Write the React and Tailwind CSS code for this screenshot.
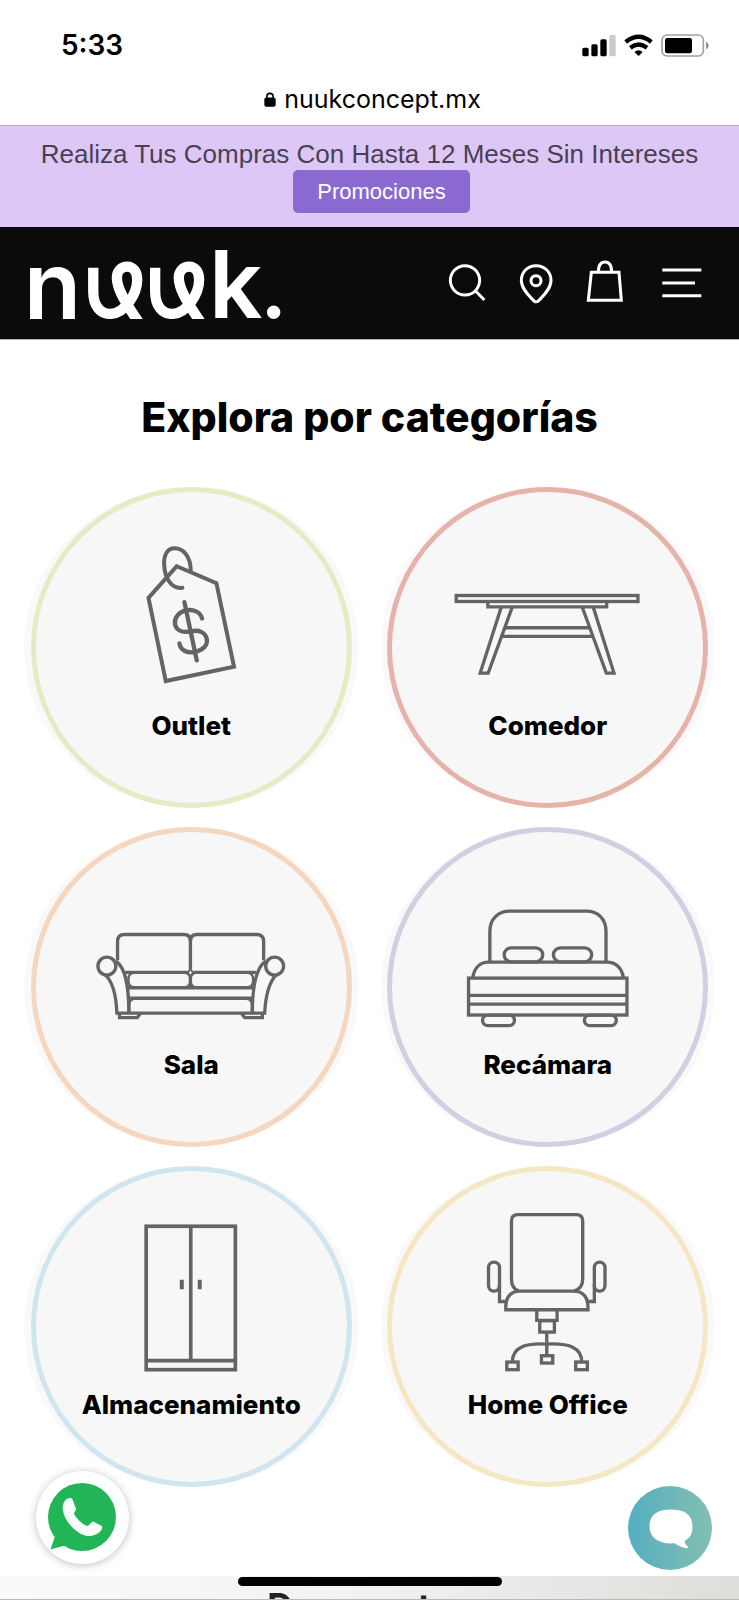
import React from "react";

const stroke = {
  fill: "none",
  stroke: "#646464",
  strokeWidth: 11,
};

function OutletIcon() {
  return (
    <svg viewBox="48 36 933 630" className="w-full" aria-hidden="true" {...stroke} strokeLinecap="round">
      <path d="M471 259 L590 310 L643 561 L438 604 L386 354 Z" strokeWidth="12" />
      <path d="M513 270 C512 232 493 205 464 205 C441 205 432 228 433 254 C435 292 452 328 488 324" strokeWidth="12" />
      <path d="M494 367 L531 542" strokeWidth="13" />
      <path d="M547 416 C542 396 520 387 498 392 C476 397 462 415 466 434 C471 455 492 459 513 455 C538 449 556 457 561 477 C565 497 549 512 525 517 C501 521 482 511 479 491" strokeWidth="13" />
    </svg>
  );
}

function TableIcon() {
  return (
    <svg viewBox="66 36 933 630" className="w-full" aria-hidden="true" {...stroke} strokeWidth="10">
      <rect x="259" y="347" width="546" height="18" />
      <path d="M354 365 V381 H711 V365" />
      <path d="M394 383 L331 580 H355 L427 383" />
      <path d="M638 383 L710 580 H733 L671 383" />
      <path d="M405 444 H661 M395 470 H670" />
    </svg>
  );
}

function SofaIcon() {
  return (
    <svg viewBox="48 33 933 630" className="w-full" aria-hidden="true" {...stroke} strokeWidth="10">
      <path d="M293 418 V362 Q293 341 314 341 H492 Q512 341 512 361 Q512 341 532 341 H711 Q732 341 732 362 V418" />
      <path d="M512 355 V445 M512 466 V500" />
      <circle cx="261" cy="436" r="27" />
      <circle cx="765" cy="436" r="27" />
      <path d="M288 421 C316 440 327 490 327 577 M738 421 C710 440 698 490 698 577" />
      <path d="M257 463 C280 485 289 525 291 577 H735 C738 525 748 485 769 463" />
      <path d="M316 455 H503 M521 455 H709" />
      <rect x="326" y="456" width="185" height="43" rx="16" strokeWidth="7" />
      <rect x="513" y="456" width="187" height="43" rx="16" strokeWidth="7" />
      <path d="M503 456 L512 446 L521 456 L512 466 Z" strokeWidth="6" />
      <path d="M325 501 H700 M327 532 H698" />
      <path d="M328 577 V552 Q328 534 346 534 H679 Q697 534 697 552 V577" strokeWidth="8" />
      <path d="M299 579 V591 H352 L361 579 M728 579 V591 H675 L666 579" />
    </svg>
  );
}

function BedIcon() {
  return (
    <svg viewBox="66 33 933 630" className="w-full" aria-hidden="true" {...stroke} strokeWidth="10">
      <path d="M360 423 V332 C360 294 385 271 420 271 H650 C685 271 709 294 709 332 V423" />
      <rect x="403" y="381" width="116" height="42" rx="21" />
      <rect x="551" y="381" width="115" height="42" rx="21" />
      <path d="M309 470 C313 441 331 424 357 424 H712 C738 424 757 441 761 470" />
      <rect x="296" y="472" width="476" height="111" />
      <path d="M296 524 H772 M296 550 H772" />
      <rect x="338" y="583" width="96" height="32" rx="16" />
      <rect x="644" y="583" width="96" height="32" rx="16" />
    </svg>
  );
}

function WardrobeIcon() {
  return (
    <svg viewBox="48 30 933 630" className="w-full" aria-hidden="true" {...stroke}>
      <rect x="379" y="196" width="268" height="431" />
      <path d="M513 196 V600 M379 600 H647" />
      <path d="M486 357 V385 M540 357 V385" strokeWidth="12" />
    </svg>
  );
}

function ChairIcon() {
  return (
    <svg viewBox="66 30 933 630" className="w-full" aria-hidden="true" {...stroke} strokeWidth="10">
      <path d="M447 391 Q425 382 425 355 V180 Q425 161 444 161 H620 Q639 161 639 180 V355 Q639 382 613 391" />
      <path d="M408 447 C406 412 420 391 451 391 H612 C643 391 656 412 655 447 Z" />
      <rect x="356" y="304" width="33" height="87" rx="16" />
      <rect x="674" y="304" width="32" height="87" rx="16" />
      <path d="M389 372 V422 H413 M674 372 V422 H650" />
      <path d="M501 447 V479 H562 V447" />
      <rect x="510" y="480" width="44" height="34" />
      <path d="M531 514 V583 M428 603 C428 562 460 547 531 550 C602 547 636 562 636 603" />
      <rect x="411" y="604" width="34" height="23" />
      <rect x="515" y="585" width="34" height="22" />
      <rect x="618" y="604" width="35" height="23" />
    </svg>
  );
}

const categories = [
  { name: "Outlet", ring: "border-[#e7ebc5]", Icon: OutletIcon },
  { name: "Comedor", ring: "border-[#e6b3aa]", Icon: TableIcon },
  { name: "Sala", ring: "border-[#f5d6bf]", Icon: SofaIcon },
  { name: "Recámara", ring: "border-[#d2cfe3]", Icon: BedIcon },
  { name: "Almacenamiento", ring: "border-[#cfe5f0]", Icon: WardrobeIcon },
  { name: "Home Office", ring: "border-[#f6e7c3]", Icon: ChairIcon },
];

function StatusBar() {
  return (
    <div className="shrink-0 border-b border-[#b7a6c9] bg-white pt-[21px] pb-2 font-['Inter',sans-serif] text-black">
      <div className="flex h-12 items-center justify-between pr-[30px] pl-[61px]">
        <span className="text-[28px] leading-8 font-semibold">5:33</span>
        <div className="flex items-center gap-2">
          <svg viewBox="640 98 102 69" className="h-[23px] w-[34px]" aria-hidden="true">
            <rect x="641" y="139" width="19" height="26" rx="5" />
            <rect x="668" y="129" width="19" height="36" rx="5" />
            <rect x="695" y="114" width="19" height="51" rx="5" />
            <rect x="722" y="101" width="19" height="64" rx="5" fill="#cbcbcb" />
          </svg>
          <svg viewBox="765 98 87 69" className="h-[23px] w-[29px]" aria-hidden="true" fill="none" stroke="#000" strokeWidth="13">
            <path d="M770 122 Q809 91 847 122" />
            <path d="M784 139 Q809 120 834 139" />
            <path d="M796 152 Q809 142 821 152 L809 164 Z" fill="#000" stroke="none" />
          </svg>
          <svg viewBox="876 98 144 69" className="h-[23px] w-[48px]" aria-hidden="true">
            <rect x="879" y="101" width="124" height="63" rx="15" fill="none" stroke="#a3a3a3" strokeWidth="5" />
            <rect x="888" y="110" width="81" height="46" rx="7" />
            <path d="M1011 121 Q1019 125 1019 132 Q1019 140 1011 144 Z" fill="#8f8f8f" />
          </svg>
        </div>
      </div>
      <div className="mt-3 flex items-center justify-center gap-2 pl-1.5">
        <svg viewBox="790 274 37 46" className="h-[15px] w-3" aria-hidden="true">
          <rect x="791" y="291" width="35" height="28" rx="6" />
          <path d="M799 294 V287 Q799 278 808 278 Q818 278 818 287 V294" fill="none" stroke="#000" strokeWidth="5" />
        </svg>
        <span className="text-[25px] leading-9">nuukconcept.mx</span>
      </div>
    </div>
  );
}

function Logo() {
  return (
    <svg viewBox="84 375 766 228" className="w-[255px] overflow-visible" role="img" aria-label="nuuk." fill="#fff">
      <defs>
        <clipPath id="baseline">
          <rect x="84" y="375" width="766" height="222" />
        </clipPath>
      </defs>
      <text x="71" y="596" fontFamily="Inter, sans-serif" fontSize="282" fontWeight="600">n</text>
      <g clipPath="url(#baseline)" fill="none" stroke="#fff" strokeWidth="31">
        <path d="M280 443 V515 C280 560 302 582 330 582 C375 582 412 520 412 480 C412 455 400 440 382 440 C363 440 351 455 351 474 C351 502 370 540 416 606" />
        <path d="M466 443 V515 C466 560 488 582 516 582 C561 582 598 520 598 480 C598 455 586 440 568 440 C549 440 537 455 537 474 C537 502 556 540 602 606" />
      </g>
      <text x="628" y="595" fontFamily="Inter, sans-serif" fontSize="282" fontWeight="600">k</text>
      <circle cx="822" cy="577" r="20" />
    </svg>
  );
}

function Header() {
  const icon = { fill: "none", stroke: "#fff", strokeWidth: 9, "aria-hidden": true };
  return (
    <header className="flex h-[113px] shrink-0 items-center justify-between border-b border-[#b5b5b5] bg-[#0b0b0b] pr-[37px] pl-7">
      <a href="#inicio">
        <Logo />
      </a>
      <nav className="flex items-center gap-[29px]">
        <button type="button" aria-label="Buscar">
          <svg viewBox="232 417 120 144" className="h-12 w-10" {...icon}>
            <circle cx="286" cy="481" r="44" />
            <path d="M317 512 L344 540" />
          </svg>
        </button>
        <a href="#tiendas" aria-label="Tiendas">
          <svg viewBox="439 417 120 144" className="h-12 w-10" {...icon}>
            <path d="M499 437 C473 437 455 457 455 481 C455 508 480 529 493 543 Q499 548 506 543 C519 529 544 508 544 481 C544 457 526 437 499 437 Z" />
            <circle cx="499" cy="482" r="15" />
          </svg>
        </a>
        <a href="#carrito" aria-label="Carrito">
          <svg viewBox="648 417 120 144" className="h-12 w-10" {...icon}>
            <path d="M667 457 H750 L757 541 H658 Z" />
            <path d="M688 457 C688 436 694 426 708 426 C722 426 728 436 728 457" />
          </svg>
        </a>
        <button type="button" aria-label="Menú" className="ml-2">
          <svg viewBox="878 417 120 144" className="h-12 w-10" {...icon}>
            <path d="M879 450 H996 M879 489 H977 M879 527 H996" />
          </svg>
        </button>
      </nav>
    </header>
  );
}

function CategoryLink({ name, ring, Icon }) {
  return (
    <a href="#categoria" className="flex aspect-[335/321] justify-center rounded-[50%] bg-[#f9f9fa]">
      <div className={`flex aspect-square h-full flex-col items-center rounded-full border-[5px] bg-[#f7f7f7] ${ring}`}>
        <Icon />
        <span className="mt-2 text-[26px] leading-8 font-extrabold text-black">{name}</span>
      </div>
    </a>
  );
}

export default function App() {
  return (
    <div className="flex h-screen flex-col overflow-hidden border-b border-[#b9b9b9] bg-white font-['Inter',sans-serif]">
      <StatusBar />
      <div className="flex shrink-0 flex-col items-center bg-[#dcc7f7] pt-3 pb-[14px] font-['Liberation_Sans',Arial,sans-serif]">
        <p className="text-[26px] leading-8 whitespace-nowrap text-[#4a4150]">
          Realiza Tus Compras Con Hasta 12 Meses Sin Intereses
        </p>
        <a href="#promociones" className="ml-6 rounded-[5px] bg-[#8a69d1] px-6 text-[22px] leading-[43px] text-white">
          Promociones
        </a>
      </div>
      <Header />
      <main className="shrink-0">
        <h1 className="pt-[53px] pb-[46px] text-center text-[41px] leading-12 font-extrabold text-black">
          Explora por categorías
        </h1>
        <div className="grid grid-cols-2 gap-x-[22px] gap-y-[19px] px-6">
          {categories.map((category) => (
            <CategoryLink key={category.name} {...category} />
          ))}
        </div>
        <section className="mt-[89px] bg-linear-to-r from-[#fbfafa] via-[#f3f2f1] to-[#dfddda] pt-1.5">
          <h2 className="text-center text-[35px] leading-12 font-bold text-[#222]">Descuentos</h2>
        </section>
      </main>

      <a
        href="#whatsapp"
        aria-label="WhatsApp"
        className="fixed bottom-9 left-9 h-[93px] w-[93px] rounded-full bg-white shadow-[0_1px_8px_rgba(0,0,0,0.25)]"
      >
        <svg viewBox="0 0 93 93" aria-hidden="true">
          <circle cx="46" cy="46" r="34" fill="#22b557" />
          <path d="M14.4 78.5 L19.5 64 L29 74.5 Z" fill="#22b557" />
          <path d="M34 27 C30 27 26.5 31 26.7 38 C28 52 44 66 54 65 C60 64.5 65.5 61 66.3 56.5 C66.3 55 65 54.5 63 53.5 L58 51 C56.5 50.3 56 50.8 54.5 52.5 L52.5 54.5 C51.5 55.5 50 55 46.5 52.5 C42 49 39 45 38 42.5 C38 41.5 40 39.5 40 38 C40 37 37 30 36.3 28 C36 27 35 27 34 27 Z" fill="#f7fdf9" />
        </svg>
      </a>
      <button
        type="button"
        aria-label="Chat"
        className="fixed right-[27px] bottom-[30px] h-[84px] w-[84px] rounded-full bg-linear-to-r from-[#55aec0] to-[#82bfb0]"
      >
        <svg viewBox="0 0 84 84" aria-hidden="true">
          <path d="M43 23.5 C57 23.5 64.5 29 64.5 40.5 C64.5 48 62 52 57 54.5 C56.5 57 57.5 58.5 59.5 60 C60.5 61.5 59.5 62.5 58 62.2 C53 61.5 49 59 47 57.3 C31 58.5 21.5 52 21.5 40.5 C21.5 29 29 23.5 43 23.5 Z" fill="#fff" />
        </svg>
      </button>
      <div className="fixed bottom-[14px] left-1/2 h-[9px] w-[264px] -translate-x-1/2 rounded-full bg-black" />
    </div>
  );
}
